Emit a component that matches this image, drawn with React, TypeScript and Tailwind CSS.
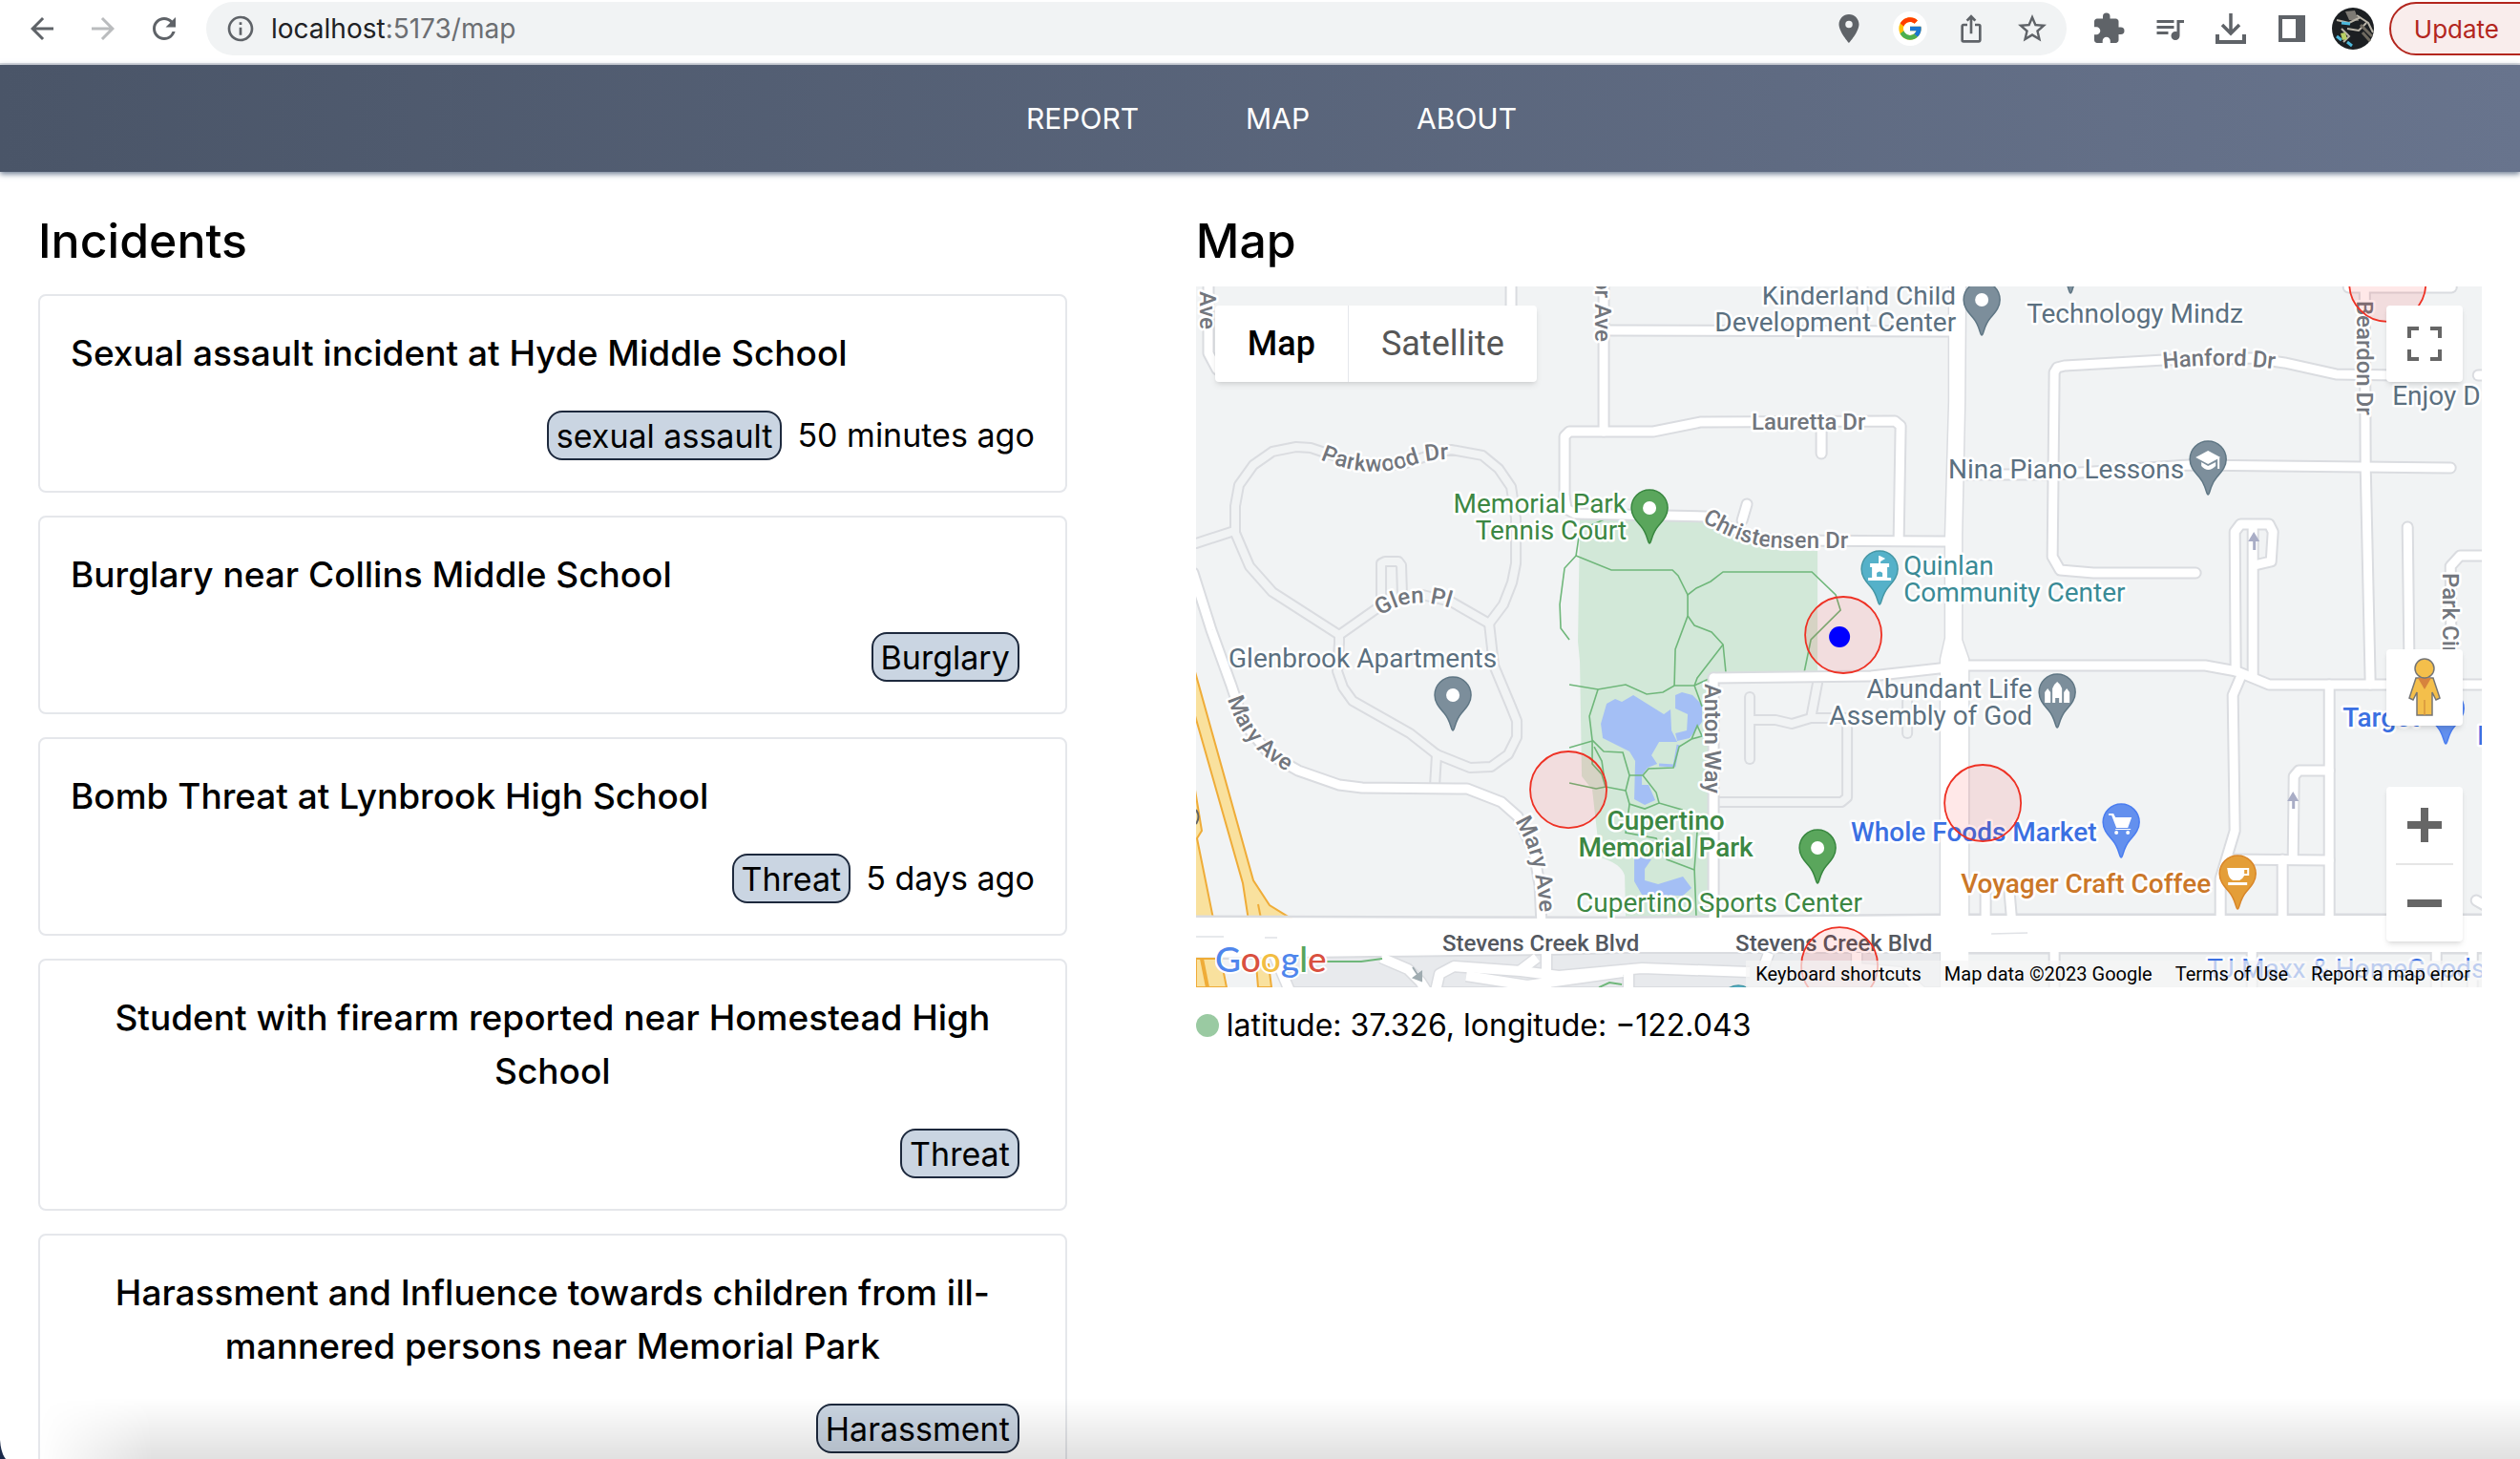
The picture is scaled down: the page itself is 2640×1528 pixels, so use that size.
import React from 'react';
import { FcGoogle } from 'react-icons/fc';
import {
  MdArrowBack,
  MdArrowForward,
  MdExtension,
  MdInfoOutline,
  MdIosShare,
  MdLocationOn,
  MdQueueMusic,
  MdRefresh,
  MdStarBorder,
} from 'react-icons/md';

type Incident = {
  title: string;
  tag: string;
  time?: string;
};

const incidents: Incident[] = [
  { title: 'Sexual assault incident at Hyde Middle School', tag: 'sexual assault', time: '50 minutes ago' },
  { title: 'Burglary near Collins Middle School', tag: 'Burglary' },
  { title: 'Bomb Threat at Lynbrook High School', tag: 'Threat', time: '5 days ago' },
  { title: 'Student with firearm reported near Homestead High School', tag: 'Threat' },
  { title: 'Harassment and Influence towards children from ill-mannered persons near Memorial Park', tag: 'Harassment' },
];

// Residential lanes, drawn in the same tone as the ground
const lanes = [
  'M1253 569 L1293 556',
  'M1403 665 L1333 620 L1309 593 L1294 558 L1294 530 L1298 508 L1313 487 L1333 473 L1358 468 L1373 469 L1400 478 L1430 488 L1470 486 L1500 476 L1520 471 L1553 477 L1570 491 L1583 510 L1588 543 L1588 590 L1584 610 L1575 633 L1560 653 L1520 630 L1490 623 L1447 634 Z',
  'M1447 634 V590 L1451 588 H1465 L1468 592 L1469 625',
  'M1403 665 L1403 673 L1401 703 L1407 720 L1417 734 L1477 768 L1505 790 L1540 804 L1562 803 L1580 790 L1589 772 L1589 755 L1583 740 L1565 697 L1560 653',
  'M1505 790 L1503 823',
  'M1833 730 V795',
  'M1835 754 H1860 L1877 758 L1897 752 H1935 V835 L1929 840 H1800',
  'M1897 752 L1904 715',
  'M1998 735 V768',
];

const roads = [
  'M1266 300 V370 L1275 387',
  'M1583 300 V330',
  'M1680 300 V452',
  'M1680 346 L2042 347',
  'M1951 300 V346',
  'M1639 528 V457 L1644 452 L1732 452 L1782 442 L1985 441 L1991 446 L1989 566',
  'M1908 443 L1908 475',
  'M1639 520 L1641 533 L1650 538 L1787 541 L1833 562 L1867 566 L2038 567',
  'M1825 545 L1830 528',
  'M1250 600 L1269 660 L1290 718 L1303 757 L1330 790 L1360 807 L1403 822 L1427 825 L1537 826 L1573 840 L1590 855 L1607 893 L1613 927 L1615 970',
  'M1795 710 L1960 708 L2040 699',
  'M1795 710 V970',
  'M2055 697 H2310 L2343 703 L2377 717 H2605',
  'M2300 600 L2193 600 L2158 597 L2150 583 L2152 390 L2155 385 L2163 383 L2267 377 L2360 375 L2393 380 L2447 392 L2510 393',
  'M2596 393 H2610',
  'M2050 497 L2150 497 L2293 487 L2567 490',
  'M2477 290 L2478 490 L2483 717',
  'M2460 301 L2568 301',
  'M2342 703 L2341 557 L2347 549 L2377 549 L2381 557 L2379 588 L2362 592',
  'M2360 550 V708',
  'M2522 552 L2524 717',
  'M2600 582 H2577 L2567 593 L2568 717',
  'M2348 707 L2339 728 L2341 870 L2326 920 V970',
  'M2440 717 V970',
  'M2440 807 H2408 L2403 813 L2402 900',
  'M2333 900 L2440 901',
  'M2391 900 V970',
  'M2080 930 V970',
  'M2105 935 L2108 970',
  'M2152 995 V1040',
  'M2359 995 V1040',
  'M2552 995 V1040',
  'M2590 995 V1040',
  'M2594 943 L2606 950',
];

const plazaRoads = [
  'M1335 1000 L1352 1040',
  'M1447 1003 L1475 1015 L1488 1028 L1497 1042',
  'M1503 1042 L1508 1020 L1523 1012 L1593 1017 L1633 1022 L1720 1014 L1833 1018',
  'M1593 1016 L1610 1003',
  'M1536 1022 L1600 1032 L1700 1018',
  'M1620 995 V1034',
  'M1706 1016 V1040',
  'M1853 998 L1846 1017',
  'M1945 998 V1014 L1990 1018 L2015 1040',
];

const footpaths = [
  'M1683 543 L1655 555 L1651 582 L1688 597 L1752 597 L1758 603 L1768 623 L1777 616 L1792 609 L1805 599 L1898 599 L1923 623 L1928 639 L1897 670 L1890 704',
  'M1651 582 L1639 595 L1634 633 L1635 658 L1644 670',
  'M1768 623 L1768 645 L1755 680 L1754 718',
  'M1768 645 L1775 655 L1793 662 L1805 675 L1808 705',
  'M1805 675 L1778 710 L1775 718',
  'M1644 717 L1674 722 L1703 717 L1725 727 L1742 725 L1754 718 L1775 718 L1790 711',
  'M1674 722 L1665 750 L1668 775 L1680 787 L1700 788 L1707 812 L1703 828 L1707 842 L1723 847 L1738 841 L1762 848 L1778 870',
  'M1644 783 L1668 776 L1668 800 L1678 811 L1682 824',
  'M1670 782 L1678 797 L1680 811',
  'M1644 820 L1672 826 L1682 824 L1703 828',
  'M1707 812 L1721 812 L1727 805 L1753 804 L1759 782 L1772 774 L1783 771 L1778 760 L1772 774',
  'M1775 718 L1783 740',
  'M1721 812 L1735 830 L1738 841',
  'M1707 842 L1703 872 L1735 878 L1746 900 L1775 911',
  'M1778 870 L1775 910 L1777 962',
];

const tones = {
  grey: { fill: '#7c8e9b', edge: '#5f7684' },
  green: { fill: '#5aa65c', edge: '#38863f' },
  teal: { fill: '#55b1c9', edge: '#4597a5' },
  blue: { fill: '#6390ee', edge: '#4a7df0' },
  orange: { fill: '#e49e38', edge: '#d98629' },
};

const Dot = () => <circle r="7" fill="#fff" />;

const Castle = () => (
  <g fill="#fff">
    <path d="M-1 -14 h1 l6 3 -5 3 v2 h-2 z" />
    <path fillRule="evenodd" d="M-10 -6 h20 v4 h-2 v11 h4 v3 h-24 v-3 h4 v-11 h-2 z M-3 8 h6 v-4 q-3 -3 -6 0 z" />
  </g>
);

const Cap = () => (
  <g fill="#fff">
    <path d="M0 -9 L13 -2 L0 5 L-13 -2 Z" />
    <path d="M-7 3 L0 7 L8 3 V7 Q0 15 -7 7 Z" />
    <path d="M10 -1 h2 v11 h-2 z" />
  </g>
);

const Church = () => (
  <g fill="#fff">
    <path d="M-13 11 V0 l3 -4 3 4 v11 z M7 11 V0 l3 -4 3 4 v11 z" />
    <path d="M-5 11 V-4 Q-4 -8 0 -11 Q4 -8 5 -4 V11 H2 V6 H-2 V11 Z" />
  </g>
);

const Cart = () => (
  <g fill="#fff">
    <path d="M-13 -9 h5 l2 4 h17 l-4 11 h-12 l-5 -13 h-3 z" />
    <path d="M-6 8 h16 v-1 h-16 z" />
    <circle cx="-5" cy="11" r="2" />
    <circle cx="7" cy="11" r="2" />
  </g>
);

const Cup = () => (
  <g fill="#fff">
    <path fillRule="evenodd" d="M-11 -6 H12 V2 H7 Q5 6 2 7 H-5 Q-9 5 -10 0 Z M7 -4 h3 v4 h-3 z" />
    <path d="M-10 9 H10 V12 H-10 Z" />
  </g>
);

const pins: { x: number; y: number; tone: keyof typeof tones; icon: React.ReactNode }[] = [
  { x: 2076, y: 314, tone: 'grey', icon: <Dot /> },
  { x: 2169, y: 270, tone: 'grey', icon: <Dot /> },
  { x: 2313, y: 481, tone: 'grey', icon: <Cap /> },
  { x: 1728, y: 532, tone: 'green', icon: <Dot /> },
  { x: 1969, y: 596, tone: 'teal', icon: <Castle /> },
  { x: 1522, y: 728, tone: 'grey', icon: <Dot /> },
  { x: 2155, y: 725, tone: 'grey', icon: <Church /> },
  { x: 1904, y: 888, tone: 'green', icon: <Dot /> },
  { x: 2222, y: 861, tone: 'blue', icon: <Cart /> },
  { x: 2344, y: 915, tone: 'orange', icon: <Cup /> },
  { x: 2562, y: 742, tone: 'blue', icon: <Dot /> },
  { x: 1821, y: 1051, tone: 'teal', icon: <Dot /> },
];

const zones = [
  { x: 1931, y: 665 },
  { x: 1643, y: 827 },
  { x: 2077, y: 841 },
  { x: 1927, y: 1011 },
  { x: 2501, y: 297 },
];

const MapCanvas = () => (
  <svg
    viewBox="1253 300 1347 734"
    preserveAspectRatio="xMidYMid slice"
    className="block h-full w-full font-['Roboto',sans-serif]"
    role="img"
    aria-label="Incident map"
  >
    <rect x="1253" y="300" width="1347" height="734" fill="#f1f3f4" />

    {/* Park and ponds */}
    <path d="M1655 543 L1787 546 L1833 567 L1867 577 H1904 V706 L1790 710 V962 H1703 L1702 917 Q1698 904 1676 898 L1668 827 L1657 813 L1655 693 L1653 672 Z" fill="#d2e8d8" />
    <g fill="#a4bff5">
      <path d="M1683 737 L1692 732 L1699 735 L1711 728 L1743 748 L1750 743 L1751 765 L1757 777 L1738 777 L1730 791 L1736 800 L1726 804 L1720 812 L1720 822 L1727 822 L1734 838 L1723 843 L1712 837 L1713 797 L1707 787 L1679 773 L1677 758 Z" />
      <path d="M1755 728 L1762 725 L1773 728 L1783 738 V756 L1770 773 L1757 776 L1755 768 L1767 765 L1768 748 L1755 742 Z" />
      <path d="M1712 897 L1730 900 L1723 910 V922 L1737 926 L1763 918 L1772 930 L1763 938 L1720 937 L1712 923 Z" />
    </g>
    <path d="M1738 801 L1754 802 L1758 780" fill="none" stroke="#a4bff5" strokeWidth="3" />
    <g fill="none" stroke="#6fb77a" strokeWidth="1.6">
      {footpaths.map((d) => <path key={d} d={d} />)}
    </g>

    {/* Freeway */}
    <g fill="#f9e19e" stroke="#efac38" strokeWidth="2">
      <path d="M1251 700 L1313 922 L1330 948 L1356 964 H1308 L1302 925 L1251 746 Z" />
      <path d="M1250 815 L1259 870 L1254 878 L1271 962 H1250 Z" />
      <path d="M1318 947 L1321 962" />
    </g>

    {/* Streets: casings first, then surfaces */}
    <g fill="none" strokeLinecap="round" strokeLinejoin="round">
      <g stroke="#dadce0" strokeWidth="12">{lanes.map((d) => <path key={d} d={d} />)}</g>
      <g stroke="#f1f3f4" strokeWidth="8">{lanes.map((d) => <path key={d} d={d} />)}</g>
      <g stroke="#dadce0" strokeWidth="13">{roads.map((d) => <path key={d} d={d} />)}</g>
    </g>
    <path d="M2042 290 L2042 420 L2038 560 L2038 668 L2033 690 V960 M2059 290 L2058 420 L2055 560 L2055 670 L2062 690 V960" fill="none" stroke="#dadce0" strokeWidth="3" />
    <path d="M1253 960 L1700 961 L2033 958 H2600" fill="none" stroke="#dadce0" strokeWidth="3" />
    <path d="M1345 1003 L1620 1000 L1700 998 H2033 V1034 H1352 Z" fill="#e8eaed" stroke="#dadce0" strokeWidth="2" />
    <path d="M1253 1004 H1345" stroke="#dadce0" strokeWidth="2" />
    <path d="M2062 998 H2600" stroke="#dadce0" strokeWidth="3" />
    <path d="M1253 1004 H1279 L1285 1034 H1253 Z M1316 1010 H1329 L1332 1034 H1318 Z" fill="#f9e19e" stroke="#efac38" strokeWidth="2" />
    <path d="M1259 1004 L1265 1034" stroke="#efac38" strokeWidth="4" />
    <g fill="none" strokeLinejoin="round">
      <g stroke="#dadce0" strokeWidth="13">{plazaRoads.map((d) => <path key={d} d={d} />)}</g>
      <g stroke="#fff" strokeWidth="10">{plazaRoads.map((d) => <path key={d} d={d} />)}</g>
      <g stroke="#fff" strokeWidth="9" strokeLinecap="round">{roads.map((d) => <path key={d} d={d} />)}</g>
    </g>
    <path d="M2042 290 L2042 420 L2038 560 L2038 668 L2033 690 V1034 H2062 V690 L2055 670 V560 L2058 420 L2059 290 Z" fill="#fff" />
    <path d="M1253 961 L1700 962 L2033 959 H2600 V997 H2062 L1700 997 L1620 999 L1345 1002 L1253 1002 Z" fill="#fff" />
    <path d="M1253 981 H1282 M1325 982 H1338 M2086 978 L2124 977" stroke="#e0e2e6" strokeWidth="1.5" />
    <path d="M1387 1007 H1426 L1448 1004 M1675 1034 L1686 1029 L1699 1031" fill="none" stroke="#6fb77a" strokeWidth="2" />

    {/* One-way arrows */}
    <g fill="#a9adc6">
      <path d="M2361 557 l6 10 h-4 v9 h-3 v-9 h-5 z" />
      <path d="M2402 829 l6 10 h-4 v8 h-3 v-8 h-5 z" />
    </g>
    <path d="M1480 1013 l6 9 M1489 1027 l-8 -3 8 -6 z" fill="#9fabb0" stroke="#9fabb0" strokeWidth="2" />
    <path d="M1253 848 q5 7 0 15" fill="none" stroke="#5f6368" strokeWidth="2" />

    {/* Street names */}
    <defs>
      <path id="parkwood" d="M1383 481 C1420 497 1450 497 1480 487 C1495 482 1508 480 1540 481" />
      <path id="glen" d="M1446 645 C1468 630 1495 624 1540 645" />
      <path id="mary-north" d="M1286 732 C1299 770 1315 792 1370 820" />
      <path id="mary-south" d="M1587 860 C1604 888 1613 922 1614 980" />
      <path id="christensen" d="M1783 546 C1808 562 1835 574 1870 574 L1970 574" />
      <path id="hanford" d="M2266 386 C2310 382 2345 380 2410 390" />
    </defs>
    <g fill="#72767d" stroke="#fff" strokeWidth="5" strokeLinejoin="round" paintOrder="stroke" fontSize="24" fontWeight="500">
      <text><textPath href="#parkwood">Parkwood Dr</textPath></text>
      <text><textPath href="#glen">Glen Pl</textPath></text>
      <text><textPath href="#mary-north">Mary Ave</textPath></text>
      <text><textPath href="#mary-south">Mary Ave</textPath></text>
      <text><textPath href="#christensen">Christensen Dr</textPath></text>
      <text><textPath href="#hanford">Hanford Dr</textPath></text>
      <text x="1835" y="450">Lauretta Dr</text>
      <text transform="translate(1257 305) rotate(90)">Ave</text>
      <text transform="translate(1671 358) rotate(90)" textAnchor="end">or Ave</text>
      <text transform="translate(1786 716) rotate(90)">Anton Way</text>
      <text transform="translate(2469 315) rotate(90)">Beardon Dr</text>
      <text transform="translate(2559 600) rotate(90)">Park Cir</text>
      <g fill="#54585f">
        <text x="1511" y="996">Stevens Creek Blvd</text>
        <text x="1818" y="996">Stevens Creek Blvd</text>
      </g>
    </g>

    {/* Places */}
    <g fill="#5b7080" stroke="#fff" strokeWidth="5" strokeLinejoin="round" paintOrder="stroke" fontSize="28">
      <text x="2049" y="319" textAnchor="end">Kinderland Child</text>
      <text x="2049" y="347" textAnchor="end">Development Center</text>
      <text x="2123" y="338">Technology Mindz</text>
      <text x="2506" y="424">Enjoy D</text>
      <text x="2288" y="501" textAnchor="end">Nina Piano Lessons</text>
      <text x="1287" y="699">Glenbrook Apartments</text>
      <text x="2129" y="731" textAnchor="end">Abundant Life</text>
      <text x="2129" y="759" textAnchor="end">Assembly of God</text>
      <g fill="#3a8b96">
        <text x="1994" y="602">Quinlan</text>
        <text x="1994" y="630">Community Center</text>
      </g>
      <g fill="#3c8743">
        <text x="1704" y="537" textAnchor="end">Memorial Park</text>
        <text x="1704" y="565" textAnchor="end">Tennis Court</text>
        <text x="1651" y="955">Cupertino Sports Center</text>
        <g fontWeight="500" textAnchor="middle">
          <text x="1745" y="869">Cupertino</text>
          <text x="1745" y="897">Memorial Park</text>
        </g>
      </g>
      <g fill="#3b70e2" fontWeight="500">
        <text x="1939" y="881">Whole Foods Market</text>
        <text x="2454" y="761">Target</text>
        <text x="2595" y="780">B</text>
        <text x="2312" y="1024" fontWeight="400">TJ Maxx &amp; HomeGoods</text>
      </g>
      <text x="2054" y="935" fill="#cb7728" fontWeight="500">Voyager Craft Coffee</text>
    </g>

    {pins.map((pin) => (
      <g key={`${pin.x}-${pin.y}`} transform={`translate(${pin.x} ${pin.y})`}>
        <path
          d="M0 37 C-2 37 -2 27 -9 19 C-14 13 -19 8 -19 0 A19 19 0 0 1 19 0 C19 8 14 13 9 19 C2 27 2 37 0 37 Z"
          fill={tones[pin.tone].fill}
          stroke={tones[pin.tone].edge}
          strokeWidth="1.5"
        />
        {pin.icon}
      </g>
    ))}

    {/* Reported areas */}
    {zones.map((zone) => (
      <circle key={`${zone.x}-${zone.y}`} cx={zone.x} cy={zone.y} r="40" fill="#ff0000" fillOpacity="0.09" stroke="#ee3124" strokeWidth="1.8" />
    ))}
    <circle cx="1927" cy="667" r="11" fill="#0000ff" />
  </svg>
);

const Pegman = () => (
  <svg viewBox="0 0 36 62" className="h-[62px] w-9" aria-hidden="true">
    <path d="M9 21 H27 L34 42 L30 44 L26 36 V60 H10 V36 L6 44 L2 42 Z" fill="#f4bf4b" stroke="#757575" strokeWidth="1.5" />
    <path d="M11 21 H25 L18 33 Z" fill="#d7833d" />
    <path d="M18 44 V60" stroke="#d7953d" strokeWidth="1.5" />
    <circle cx="18" cy="11" r="10" fill="#f4bf4b" stroke="#757575" strokeWidth="1.5" />
  </svg>
);

const BrowserBar = () => (
  <header className="flex h-[68px] shrink-0 items-start overflow-hidden border-b-2 border-[#dadce0] bg-white pt-0.5 font-['Inter',sans-serif] text-[#5f6368]">
    <div className="flex h-14 shrink-0 items-center gap-7 pr-[26px] pl-[26px]">
      <button aria-label="Back"><MdArrowBack className="size-9" /></button>
      <button aria-label="Forward" className="text-[#babcbe]"><MdArrowForward className="size-9" /></button>
      <button aria-label="Reload"><MdRefresh className="size-9" /></button>
    </div>
    <div className="flex h-14 min-w-0 flex-1 items-center gap-7 rounded-full bg-[#f1f3f4] pr-[18px] pl-5">
      <div className="flex flex-1 items-center gap-4">
        <MdInfoOutline className="size-8" />
        <span className="text-[28px] text-[#6b6e72]">
          <span className="text-[#202124]">localhost</span>:5173/map
        </span>
      </div>
      <button aria-label="Location"><MdLocationOn className="size-9" /></button>
      <button aria-label="Google" className="flex size-9 items-center justify-center rounded-full bg-white">
        <FcGoogle className="size-7" />
      </button>
      <button aria-label="Share"><MdIosShare className="size-9 p-0.5" /></button>
      <button aria-label="Bookmark"><MdStarBorder className="size-9" /></button>
    </div>
    <div className="flex h-14 shrink-0 items-center gap-7 pr-5 pl-[26px]">
      <button aria-label="Extensions"><MdExtension className="size-9" /></button>
      <button aria-label="Media"><MdQueueMusic className="size-9" /></button>
      <button aria-label="Downloads">
        <svg viewBox="0 0 36 36" className="size-9" fill="none" stroke="currentColor" strokeWidth="4">
          <path d="M18 2 V22 M9 14 L18 23 L27 14" strokeWidth="3.5" />
          <path d="M4 24 V32 H32 V24" />
        </svg>
      </button>
      <button aria-label="Side panel">
        <svg viewBox="0 0 36 36" className="size-9" fill="currentColor">
          <path fillRule="evenodd" d="M4 4 H32 V32 H4 Z M8 8 V28 H22 V8 Z" />
        </svg>
      </button>
      <button aria-label="Profile" className="-mx-1">
        <svg viewBox="0 0 44 44" className="size-11">
          <circle cx="22" cy="22" r="22" fill="#1c1f22" />
          <path d="M14 4 L24 3 L28 14 L18 13 Z" fill="#7d7a74" />
          <path d="M5 13 L18 16 L30 10 M16 22 L28 24 L36 16 M26 8 L38 16 L43 26 M10 22 L18 30 L12 36" stroke="#b9b4a8" strokeWidth="2" fill="none" />
          <path d="M30 18 L42 30 M32 26 L40 35" stroke="#6f6a60" strokeWidth="3" />
          <path d="M10 16 l9 1 M16 36 l5 4 M5 30 l5 4" stroke="#4bb8dc" strokeWidth="3" />
          <path d="M9 27 l5 -1 2 7 -5 1 z" fill="#b8cf63" />
        </svg>
      </button>
    </div>
    <button className="-mr-11 h-14 shrink-0 rounded-full border-2 border-[#b3261e] bg-[#f9edec] pr-16 pl-6 text-[26px] text-[#b3261e]">
      Update
    </button>
  </header>
);

const IncidentCard = ({ incident }: { incident: Incident }) => (
  <li className="flex flex-col items-start gap-8 rounded-lg border-2 border-gray-200 p-8">
    <h2 className="text-center text-[37px] leading-[56px] font-medium">{incident.title}</h2>
    <div className="flex w-full items-center justify-end text-[34px]">
      <span className="mr-4 flex h-[52px] items-center rounded-2xl border-2 border-slate-800 bg-slate-300 px-2">{incident.tag}</span>
      {incident.time && <time className="leading-[48px]">{incident.time}</time>}
    </div>
  </li>
);

const App: React.FC = () => {
  return (
    <div className="relative flex h-screen flex-col overflow-hidden bg-white font-['Inter',sans-serif] text-black">
      <BrowserBar />

      <nav className="relative flex h-28 shrink-0 items-center justify-center gap-28 bg-linear-to-r from-[#4a5568] to-[#68748d] pl-6 text-[30px] text-white shadow-[0_2px_6px_#64748b]">
        <a href="#report">REPORT</a>
        <a href="#map">MAP</a>
        <a href="#about">ABOUT</a>
      </nav>

      <main className="grid grid-cols-[4fr_5fr] items-start gap-[135px] px-10 pt-9">
        <section>
          <h1 className="mb-5 text-[50px] leading-[72px] font-medium">Incidents</h1>
          <ul className="flex flex-col gap-6">
            {incidents.map((incident) => (
              <IncidentCard key={incident.title} incident={incident} />
            ))}
          </ul>
        </section>

        <section>
          <h1 className="mb-3 text-[50px] leading-[72px] font-medium">Map</h1>
          <div className="relative h-[734px] overflow-hidden font-['Roboto',sans-serif]">
            <MapCanvas />

            {/* Map controls */}
            <div className="absolute top-5 left-5 flex h-20 rounded-sm bg-white text-[36px] shadow-md">
              <button className="border-r border-gray-200 px-[34px] font-medium">Map</button>
              <button className="px-[34px] text-[#565656]">Satellite</button>
            </div>
            <button aria-label="Toggle fullscreen" className="absolute top-5 right-5 flex size-20 items-center justify-center rounded-sm bg-white shadow-md">
              <svg viewBox="0 0 36 36" className="size-9" fill="none" stroke="#666" strokeWidth="4">
                <path d="M2 12 V2 H12 M24 2 H34 V12 M34 24 V34 H24 M12 34 H2 V24" />
              </svg>
            </button>
            <div className="absolute right-5 bottom-12 flex flex-col gap-16">
              <button aria-label="Street View" className="flex size-20 items-center justify-center rounded-sm bg-white shadow-md">
                <Pegman />
              </button>
              <div className="flex w-20 flex-col items-center rounded-sm bg-white shadow-md">
                <button aria-label="Zoom in" className="flex size-20 items-center justify-center">
                  <svg viewBox="0 0 36 36" className="size-9" fill="#666"><path d="M14 0 h8 v14 h14 v8 h-14 v14 h-8 v-14 h-14 v-8 h14 z" /></svg>
                </button>
                <div className="h-0.5 w-[60px] bg-[#e6e6e6]" />
                <button aria-label="Zoom out" className="flex size-20 items-center justify-center">
                  <svg viewBox="0 0 36 36" className="size-9" fill="#666"><path d="M0 14 h36 v8 h-36 z" /></svg>
                </button>
              </div>
            </div>
            <a href="#google" aria-label="Google" className="absolute bottom-0 left-5">
              <svg viewBox="0 0 124 50" className="h-[50px] w-[124px] font-['Lato',sans-serif]">
                <text x="0" y="34" fontSize="37" fontWeight="500" stroke="#fff" strokeWidth="4" paintOrder="stroke">
                  <tspan fill="#4f86ec">G</tspan>
                  <tspan fill="#d9503f">o</tspan>
                  <tspan fill="#f2bd42">o</tspan>
                  <tspan fill="#4f86ec">g</tspan>
                  <tspan fill="#58a55c">l</tspan>
                  <tspan fill="#d9503f">e</tspan>
                </text>
              </svg>
            </a>
            <div className="absolute right-0 bottom-0 flex h-7 items-center gap-6 bg-[#f5f5f5]/70 pr-3 pl-2.5 text-[20px]">
              <button>Keyboard shortcuts</button>
              <span>Map data ©2023 Google</span>
              <a href="#terms">Terms of Use</a>
              <a href="#report-error">Report a map error</a>
            </div>
          </div>
          <div className="mt-4 flex items-center gap-2">
            <span className="size-6 rounded-full bg-[#9acaa2]" />
            <p className="text-[32px] leading-[48px]">latitude: 37.326, longitude: −122.043</p>
          </div>
        </section>
      </main>

      {/* Shade along the lower window edge */}
      <div className="pointer-events-none absolute right-0 bottom-0 left-10 h-16 bg-linear-to-b from-transparent to-black/12 [mask-image:linear-gradient(to_right,transparent,black_120px)]" />
      <svg viewBox="0 0 6 20" className="absolute bottom-0 left-0 h-5 w-1.5"><path d="M0 0 Q1 14 6 20 H0 Z" fill="#1b2a4a" /></svg>
    </div>
  );
};

export default App;
